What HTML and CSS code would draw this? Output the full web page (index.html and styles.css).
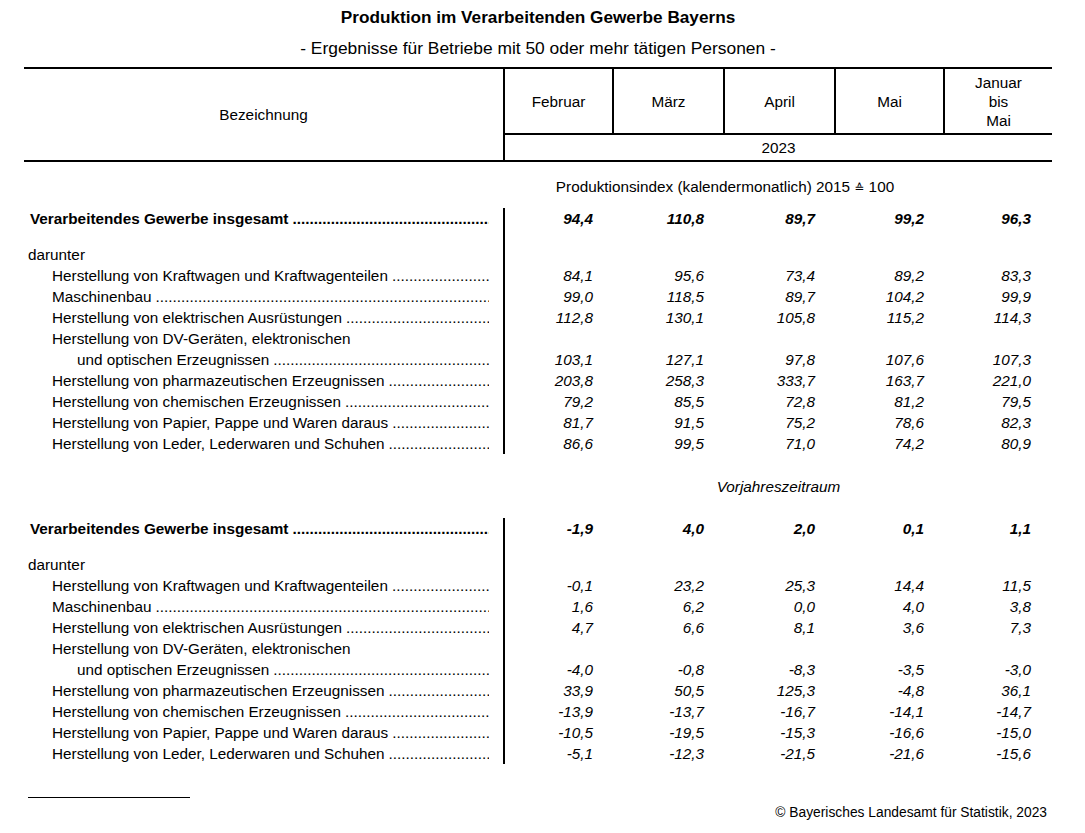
FILE: index.html
```html
<!DOCTYPE html>
<html lang="de">
<head>
<meta charset="utf-8">
<title>Produktion im Verarbeitenden Gewerbe Bayerns</title>
<link rel="stylesheet" href="styles.css">
</head>
<body>
<div class="page">
  <h1 class="title">Produktion im Verarbeitenden Gewerbe Bayerns</h1>
  <p class="subtitle">- Ergebnisse für Betriebe mit 50 oder mehr tätigen Personen -</p>

  <table class="tbl">
    <colgroup>
      <col class="c-lbl"><col class="c-a"><col class="c-b"><col class="c-b"><col class="c-a"><col class="c-c">
    </colgroup>
    <thead>
      <tr>
        <th rowspan="2" class="h-bez">Bezeichnung</th>
        <th class="h-mon">Februar</th>
        <th class="h-mon">März</th>
        <th class="h-mon">April</th>
        <th class="h-mon">Mai</th>
        <th class="h-mon h-last">Januar<br>bis<br>Mai</th>
      </tr>
      <tr>
        <th colspan="5" class="h-year">2023</th>
      </tr>
    </thead>
    <tbody>
      <tr class="sec sec-1"><td></td><td colspan="4" class="sec-txt">Produktionsindex (kalendermonatlich) 2015 <span class="eq">≙</span> 100</td><td></td></tr>
      <tr class="total"><td class="lbl"><div class="lead ind0"><span class="t">Verarbeitendes Gewerbe insgesamt</span></div></td><td class="num">94,4</td><td class="num">110,8</td><td class="num">89,7</td><td class="num">99,2</td><td class="num">96,3</td></tr>
      <tr class="dar"><td class="lbl"><div class="plain ind-d">darunter</div></td><td colspan="5"></td></tr>
      <tr><td class="lbl"><div class="lead ind1"><span class="t">Herstellung von Kraftwagen und Kraftwagenteilen</span></div></td><td class="num">84,1</td><td class="num">95,6</td><td class="num">73,4</td><td class="num">89,2</td><td class="num">83,3</td></tr>
      <tr><td class="lbl"><div class="lead ind1"><span class="t">Maschinenbau</span></div></td><td class="num">99,0</td><td class="num">118,5</td><td class="num">89,7</td><td class="num">104,2</td><td class="num">99,9</td></tr>
      <tr><td class="lbl"><div class="lead ind1"><span class="t">Herstellung von elektrischen Ausrüstungen</span></div></td><td class="num">112,8</td><td class="num">130,1</td><td class="num">105,8</td><td class="num">115,2</td><td class="num">114,3</td></tr>
      <tr><td class="lbl"><div class="plain ind1">Herstellung von DV-Geräten, elektronischen</div></td><td colspan="5"></td></tr>
      <tr><td class="lbl"><div class="lead ind2"><span class="t">und optischen Erzeugnissen</span></div></td><td class="num">103,1</td><td class="num">127,1</td><td class="num">97,8</td><td class="num">107,6</td><td class="num">107,3</td></tr>
      <tr><td class="lbl"><div class="lead ind1"><span class="t">Herstellung von pharmazeutischen Erzeugnissen</span></div></td><td class="num">203,8</td><td class="num">258,3</td><td class="num">333,7</td><td class="num">163,7</td><td class="num">221,0</td></tr>
      <tr><td class="lbl"><div class="lead ind1"><span class="t">Herstellung von chemischen Erzeugnissen</span></div></td><td class="num">79,2</td><td class="num">85,5</td><td class="num">72,8</td><td class="num">81,2</td><td class="num">79,5</td></tr>
      <tr><td class="lbl"><div class="lead ind1"><span class="t">Herstellung von Papier, Pappe und Waren daraus</span></div></td><td class="num">81,7</td><td class="num">91,5</td><td class="num">75,2</td><td class="num">78,6</td><td class="num">82,3</td></tr>
      <tr><td class="lbl"><div class="lead ind1"><span class="t">Herstellung von Leder, Lederwaren und Schuhen</span></div></td><td class="num">86,6</td><td class="num">99,5</td><td class="num">71,0</td><td class="num">74,2</td><td class="num">80,9</td></tr>

      <tr class="sec sec-2"><td></td><td colspan="5" class="sec-txt sec-it">Vorjahreszeitraum</td></tr>
      <tr class="total"><td class="lbl"><div class="lead ind0"><span class="t">Verarbeitendes Gewerbe insgesamt</span></div></td><td class="num">-1,9</td><td class="num">4,0</td><td class="num">2,0</td><td class="num">0,1</td><td class="num">1,1</td></tr>
      <tr class="dar"><td class="lbl"><div class="plain ind-d">darunter</div></td><td colspan="5"></td></tr>
      <tr><td class="lbl"><div class="lead ind1"><span class="t">Herstellung von Kraftwagen und Kraftwagenteilen</span></div></td><td class="num">-0,1</td><td class="num">23,2</td><td class="num">25,3</td><td class="num">14,4</td><td class="num">11,5</td></tr>
      <tr><td class="lbl"><div class="lead ind1"><span class="t">Maschinenbau</span></div></td><td class="num">1,6</td><td class="num">6,2</td><td class="num">0,0</td><td class="num">4,0</td><td class="num">3,8</td></tr>
      <tr><td class="lbl"><div class="lead ind1"><span class="t">Herstellung von elektrischen Ausrüstungen</span></div></td><td class="num">4,7</td><td class="num">6,6</td><td class="num">8,1</td><td class="num">3,6</td><td class="num">7,3</td></tr>
      <tr><td class="lbl"><div class="plain ind1">Herstellung von DV-Geräten, elektronischen</div></td><td colspan="5"></td></tr>
      <tr><td class="lbl"><div class="lead ind2"><span class="t">und optischen Erzeugnissen</span></div></td><td class="num">-4,0</td><td class="num">-0,8</td><td class="num">-8,3</td><td class="num">-3,5</td><td class="num">-3,0</td></tr>
      <tr><td class="lbl"><div class="lead ind1"><span class="t">Herstellung von pharmazeutischen Erzeugnissen</span></div></td><td class="num">33,9</td><td class="num">50,5</td><td class="num">125,3</td><td class="num">-4,8</td><td class="num">36,1</td></tr>
      <tr><td class="lbl"><div class="lead ind1"><span class="t">Herstellung von chemischen Erzeugnissen</span></div></td><td class="num">-13,9</td><td class="num">-13,7</td><td class="num">-16,7</td><td class="num">-14,1</td><td class="num">-14,7</td></tr>
      <tr><td class="lbl"><div class="lead ind1"><span class="t">Herstellung von Papier, Pappe und Waren daraus</span></div></td><td class="num">-10,5</td><td class="num">-19,5</td><td class="num">-15,3</td><td class="num">-16,6</td><td class="num">-15,0</td></tr>
      <tr><td class="lbl"><div class="lead ind1"><span class="t">Herstellung von Leder, Lederwaren und Schuhen</span></div></td><td class="num">-5,1</td><td class="num">-12,3</td><td class="num">-21,5</td><td class="num">-21,6</td><td class="num">-15,6</td></tr>
    </tbody>
  </table>

  <div class="foot-rule"></div>
  <p class="copyright">© Bayerisches Landesamt für Statistik, 2023</p>
</div>
</body>
</html>
```

FILE: styles.css
```css
html, body {
  margin: 0;
  padding: 0;
  background: #fff;
}

body {
  font-family: "Liberation Sans", Arial, "DejaVu Sans", sans-serif;
  color: #000;
  font-size: 15.3px;
}

.page {
  width: 1028px;
  margin-left: 24px;
  padding-top: 7px;
}

.title {
  margin: 0;
  font-size: 17.2px;
  line-height: 20px;
  font-weight: bold;
  text-align: center;
}

.subtitle {
  margin: 11px 0 0;
  font-size: 17.4px;
  line-height: 20px;
  text-align: center;
}

.tbl {
  margin-top: 9px;
  width: 1028px;
  table-layout: fixed;
  border-collapse: separate;
  border-spacing: 0;
}

.c-lbl { width: 481px; }
.c-a { width: 109px; }
.c-b { width: 111px; }
.c-c { width: 107px; }

.tbl th {
  font-weight: normal;
  padding: 0;
  text-align: center;
  vertical-align: middle;
  line-height: 19px;
}

.h-bez {
  border-top: 2px solid #000;
  border-bottom: 2px solid #000;
  border-right: 2px solid #000;
}

.h-mon {
  height: 64px;
  border-top: 2px solid #000;
  border-bottom: 2px solid #000;
  border-right: 2px solid #000;
}

.h-mon.h-last {
  border-right: none;
}

.h-year {
  height: 25px;
  border-bottom: 2px solid #000;
}

.tbl td {
  padding: 0;
  line-height: 21px;
  vertical-align: top;
}

.sec td {
  padding-top: 14px;
  padding-bottom: 11px;
}

.sec-2 td {
  padding-top: 22px;
  padding-bottom: 21px;
}

.sec-txt {
  text-align: center;
}

.eq {
  font-size: 12px;
  line-height: 0;
}

.sec-it {
  font-style: italic;
}

.tbl td.lbl {
  border-right: 2px solid #000;
  padding-right: 14px;
}

.dar td {
  padding-top: 15px;
}

.total {
  font-weight: bold;
}

.num {
  text-align: right;
  font-style: italic;
  padding-right: 21px !important;
}

.lead {
  display: flex;
  white-space: nowrap;
}

.lead .t {
  flex: none;
}

.lead::after {
  content: "............................................................................................................................................................................................................";
  flex: 1 1 0;
  min-width: 0;
  overflow: hidden;
  white-space: nowrap;
  margin-left: 4px;
}

.plain {
  white-space: nowrap;
}

.ind0 { padding-left: 6px; }
.ind-d { padding-left: 4px; }
.ind1 { padding-left: 28px; }
.ind2 { padding-left: 53px; }

.foot-rule {
  margin-top: 33px;
  margin-left: 4px;
  width: 162px;
  border-top: 1px solid #000;
}

.copyright {
  margin: 7px 0 0;
  font-size: 13.8px;
  line-height: 16px;
  text-align: right;
  padding-right: 5px;
}
```
